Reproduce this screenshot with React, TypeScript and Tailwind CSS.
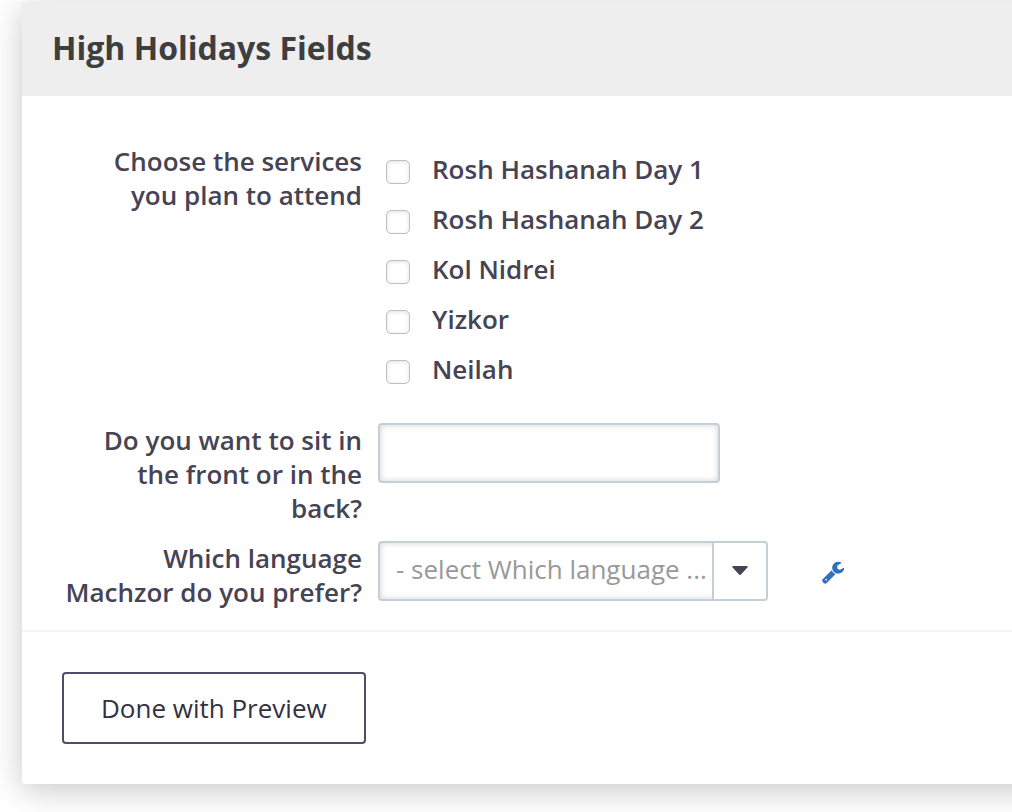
import React, { useState } from "react";

const services = [
  { id: "rosh-hashanah-1", label: "Rosh Hashanah Day 1" },
  { id: "rosh-hashanah-2", label: "Rosh Hashanah Day 2" },
  { id: "kol-nidrei", label: "Kol Nidrei" },
  { id: "yizkor", label: "Yizkor" },
  { id: "neilah", label: "Neilah" },
];

const row = "flex items-start gap-4";
const rowLabel = "w-[300px] shrink-0 text-right font-semibold";
const fieldBox =
  "h-[60px] rounded-sm border-2 border-[#c2cfd8] bg-white shadow-[inset_0_0_6px_rgba(0,0,0,0.18)]";
const checkbox =
  "mt-2 size-6 shrink-0 appearance-none rounded-[5px] border border-[#bfbfbf] bg-white shadow-[inset_0_1px_4px_rgba(0,0,0,0.12)] checked:bg-[#2c6fbb]";

function WrenchIcon() {
  return (
    <svg viewBox="0 0 1792 1792" className="size-6 fill-[#2f70bd]" aria-hidden="true">
      <path d="M448 1472q0-26-19-45t-45-19-45 19-19 45 19 45 45 19 45-19 19-45zm644-420l-682 682q-37 37-90 37-52 0-91-37l-106-108q-38-36-38-90 0-53 38-91l681-681q39 98 114.500 173.500t173.500 114.500zm634-435q0 39-23 106-47 134-164.500 217.500t-258.500 83.500q-185 0-316.500-131.500t-131.500-316.500 131.500-316.500 316.500-131.500q58 0 121.500 16.500t107.500 46.500q16 11 16 28t-16 28l-293 169v224l193 107q5-3 79-48.500t135.500-81 70.500-35.500q15 0 23.500 10t8.500 25z" />
    </svg>
  );
}

export default function App() {
  const [seat, setSeat] = useState("");
  const [language, setLanguage] = useState("");

  return (
    <div className="overflow-hidden bg-white pt-[2px] pb-7 pl-[22px] font-['Open_Sans',sans-serif] text-[26px] leading-[34px] text-[#464354]">
      {/* Card bleeds off the right edge */}
      <form
        className="-mr-12 rounded-sm bg-white shadow-[0_6px_32px_rgba(0,0,0,0.22)]"
        onSubmit={(e) => e.preventDefault()}
      >
        <header className="bg-[#eeeeee] px-[30px] pt-[23px] pb-[25px]">
          <h1 className="text-[32px] leading-[46px] font-bold text-[#3e3e3e]">
            High Holidays Fields
          </h1>
        </header>

        <div className="flex flex-col gap-4 border-b-2 border-[#f5f5f5] px-10 pt-12 pb-[21px]">
          {/* Services */}
          <div className={row} role="group" aria-labelledby="services-label">
            <div id="services-label" className={rowLabel}>
              Choose the services you plan to attend
            </div>
            <div className="flex flex-col gap-4 pt-2 pb-[21px] pl-2">
              {services.map((s) => (
                <div key={s.id} className="flex items-start gap-[22px]">
                  <input id={s.id} type="checkbox" className={checkbox} />
                  <label htmlFor={s.id} className="font-semibold">
                    {s.label}
                  </label>
                </div>
              ))}
            </div>
          </div>

          {/* Seating */}
          <div className={row}>
            <label htmlFor="seat" className={rowLabel}>
              Do you want to sit in the front or in the back?
            </label>
            <input
              id="seat"
              type="text"
              value={seat}
              onChange={(e) => setSeat(e.target.value)}
              className={`${fieldBox} w-[342px] px-4`}
            />
          </div>

          {/* Language */}
          <div className={row}>
            <label htmlFor="language" className={rowLabel}>
              Which language Machzor do you prefer?
            </label>
            <div className="relative w-[390px]">
              <select
                id="language"
                value={language}
                onChange={(e) => setLanguage(e.target.value)}
                className={`${fieldBox} w-full appearance-none pr-14 pb-1 pl-4 text-[#999999]`}
              >
                <option value="">- select Which language ...</option>
              </select>
              <span className="pointer-events-none absolute inset-y-[2px] right-[2px] flex w-[54px] items-center justify-center rounded-r-xs border-l-2 border-[#c2cfd8] bg-white">
                <svg viewBox="0 0 16 10" className="h-[10px] w-4 fill-[#464354]" aria-hidden="true">
                  <path d="M1 0h14q1 .5.400 1.400L9 8.600q-1 .9-2 0L.6 1.400Q0 .5 1 0z" />
                </svg>
              </span>
            </div>
            <button type="button" aria-label="Edit options" className="ml-[37px] pt-[19px]">
              <WrenchIcon />
            </button>
          </div>
        </div>

        <footer className="p-10">
          <button
            type="button"
            className="h-[72px] rounded-sm border-2 border-[#4d4d69] bg-white px-[37px] text-[#33313f]"
          >
            Done with Preview
          </button>
        </footer>
      </form>
    </div>
  );
}
